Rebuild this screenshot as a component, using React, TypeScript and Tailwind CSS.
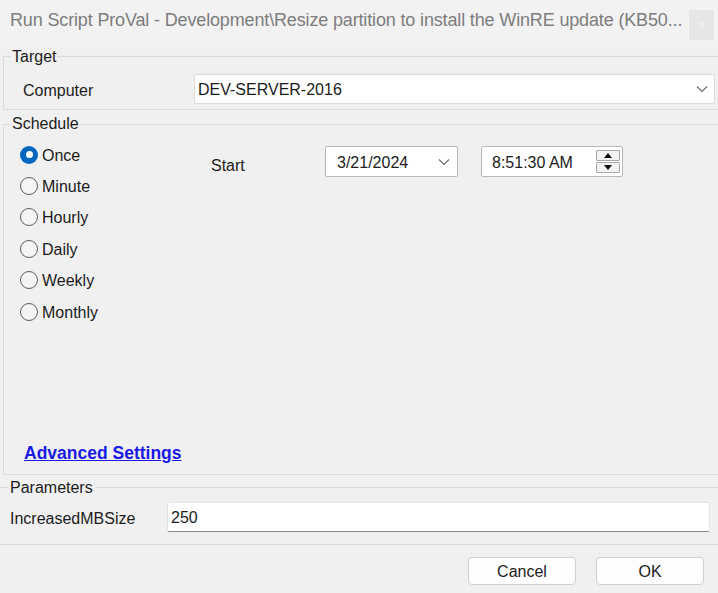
import React from "react";

function Radio({ label, checked }: { label: string; checked?: boolean }) {
  return (
    <div className="h-[31.4px] flex items-center">
      {checked ? (
        <span className="w-[18px] h-[18px] rounded-full bg-[#0067c0] flex items-center justify-center shrink-0">
          <span className="w-[7px] h-[7px] rounded-full bg-white" />
        </span>
      ) : (
        <span className="w-[18px] h-[18px] rounded-full border border-[#5c5c5c] bg-[#f5f5f5] shrink-0" />
      )}
      <span className="ml-[4px] pt-[2px] leading-[20px]">{label}</span>
    </div>
  );
}

function Chevron({ className }: { className?: string }) {
  return (
    <svg className={className} width="12" height="8" viewBox="0 0 12 8" fill="none">
      <path d="M1 1.5 L6 6.5 L11 1.5" stroke="#6b6b6b" strokeWidth="1.1" />
    </svg>
  );
}

export default function App() {
  return (
    <div className="w-[718px] h-[593px] bg-[#f0f0f0] font-['Liberation_Sans',Arial,sans-serif] text-[16px] text-[#1c1c1c] flex flex-col overflow-hidden">
      {/* Title bar */}
      <div className="h-[46px] shrink-0 flex items-start justify-between bg-[#f2f2f2]">
        <div className="pl-[10px] pt-[9px] text-[18px] leading-[22px] text-[#7d7d7d] whitespace-nowrap tracking-[-0.15px]">
          Run Script ProVal - Development\Resize partition to install the WinRE update (KB50...
        </div>
        <div className="mt-[10px] mr-[4px] w-[25px] h-[30px] bg-[#e6e6e6] flex items-center justify-center text-[13px] text-[#f4f4f4]">
          ×
        </div>
      </div>

      {/* Target */}
      <fieldset className="ml-[3px] -mr-[4px] border border-[#dadada] p-0 shrink-0">
        <legend className="ml-[7px] px-[1px] pt-[1px] leading-[20px]">Target</legend>
        <div className="pt-[7px] pb-[5px] flex items-center">
          <span className="ml-[19px] w-[171px] pt-[3px] leading-[20px]">Computer</span>
          <div className="w-[521px] h-[30px] bg-white border border-[#dcdcdc] rounded-[2px] flex items-center justify-between pl-[3px] pr-[6px]">
            <span className="pt-[2px]">DEV-SERVER-2016</span>
            <Chevron />
          </div>
        </div>
      </fieldset>

      {/* Schedule */}
      <fieldset className="mt-[4px] ml-[3px] -mr-[4px] border border-[#dadada] p-0 shrink-0">
        <legend className="ml-[7px] px-[1px] leading-[20px]">Schedule</legend>
        <div className="h-[340px] flex flex-col justify-between">
          <div className="flex pt-[5px]">
            <div className="w-[207px] pl-[16px] flex flex-col">
              <Radio label="Once" checked />
              <Radio label="Minute" />
              <Radio label="Hourly" />
              <Radio label="Daily" />
              <Radio label="Weekly" />
              <Radio label="Monthly" />
            </div>
            <div className="flex items-start mt-[7px]">
              <span className="w-[114px] mt-[10px] leading-[20px]">Start</span>
              <div className="w-[133px] h-[31px] bg-white border border-[#b8b8b8] rounded-[2px] flex items-center justify-between pl-[11px] pr-[7px]">
                <span className="pt-[2px]">3/21/2024</span>
                <Chevron />
              </div>
              <div className="ml-[23px] w-[142px] h-[31px] bg-white border border-[#b8b8b8] rounded-[2px] flex items-center justify-between pl-[10px] pr-[2px]">
                <span className="pt-[2px]">8:51:30 AM</span>
                <div className="flex flex-col w-[24px] gap-[1px]">
                  <div className="h-[11px] border border-[#a8a8a8] rounded-[1px] bg-[#f3f3f3] flex items-center justify-center">
                    <svg width="8" height="5" viewBox="0 0 8 5"><path d="M0 5 L4 0 L8 5 Z" fill="#111" /></svg>
                  </div>
                  <div className="h-[11px] border border-[#a8a8a8] rounded-[1px] bg-[#f3f3f3] flex items-center justify-center">
                    <svg width="8" height="5" viewBox="0 0 8 5"><path d="M0 0 L4 5 L8 0 Z" fill="#111" /></svg>
                  </div>
                </div>
              </div>
            </div>
          </div>
          <div className="pl-[20px] pb-[8px]">
            <span className="font-bold text-[17.5px] text-[#1a1ae6] underline leading-[22px]">Advanced Settings</span>
          </div>
        </div>
      </fieldset>

      {/* Parameters */}
      <fieldset className="mt-[2px] -ml-[2px] -mr-[4px] border-t border-b border-[#dadada] p-0 shrink-0">
        <legend className="ml-[10px] px-[2px] pt-[1px] leading-[20px]">Parameters</legend>
        <div className="pt-[4px] pb-[12px] flex items-center">
          <span className="ml-[12px] w-[157px] pt-[3px] leading-[20px]">IncreasedMBSize</span>
          <div className="w-[543px] h-[30px] bg-white border border-[#e4e4e4] border-b-[#8a8a8a] rounded-[2px] flex items-center pl-[3px] pt-[2px]">
            250
          </div>
        </div>
      </fieldset>

      {/* Buttons */}
      <div className="flex justify-end gap-[20px] pr-[14px] pt-[12px]">
        <div className="w-[108px] h-[28px] bg-[#fdfdfd] border border-[#d0d0d0] rounded-[4px] flex items-center justify-center pt-[2px]">
          Cancel
        </div>
        <div className="w-[108px] h-[28px] bg-[#fdfdfd] border border-[#d0d0d0] rounded-[4px] flex items-center justify-center pt-[2px]">
          OK
        </div>
      </div>
    </div>
  );
}
